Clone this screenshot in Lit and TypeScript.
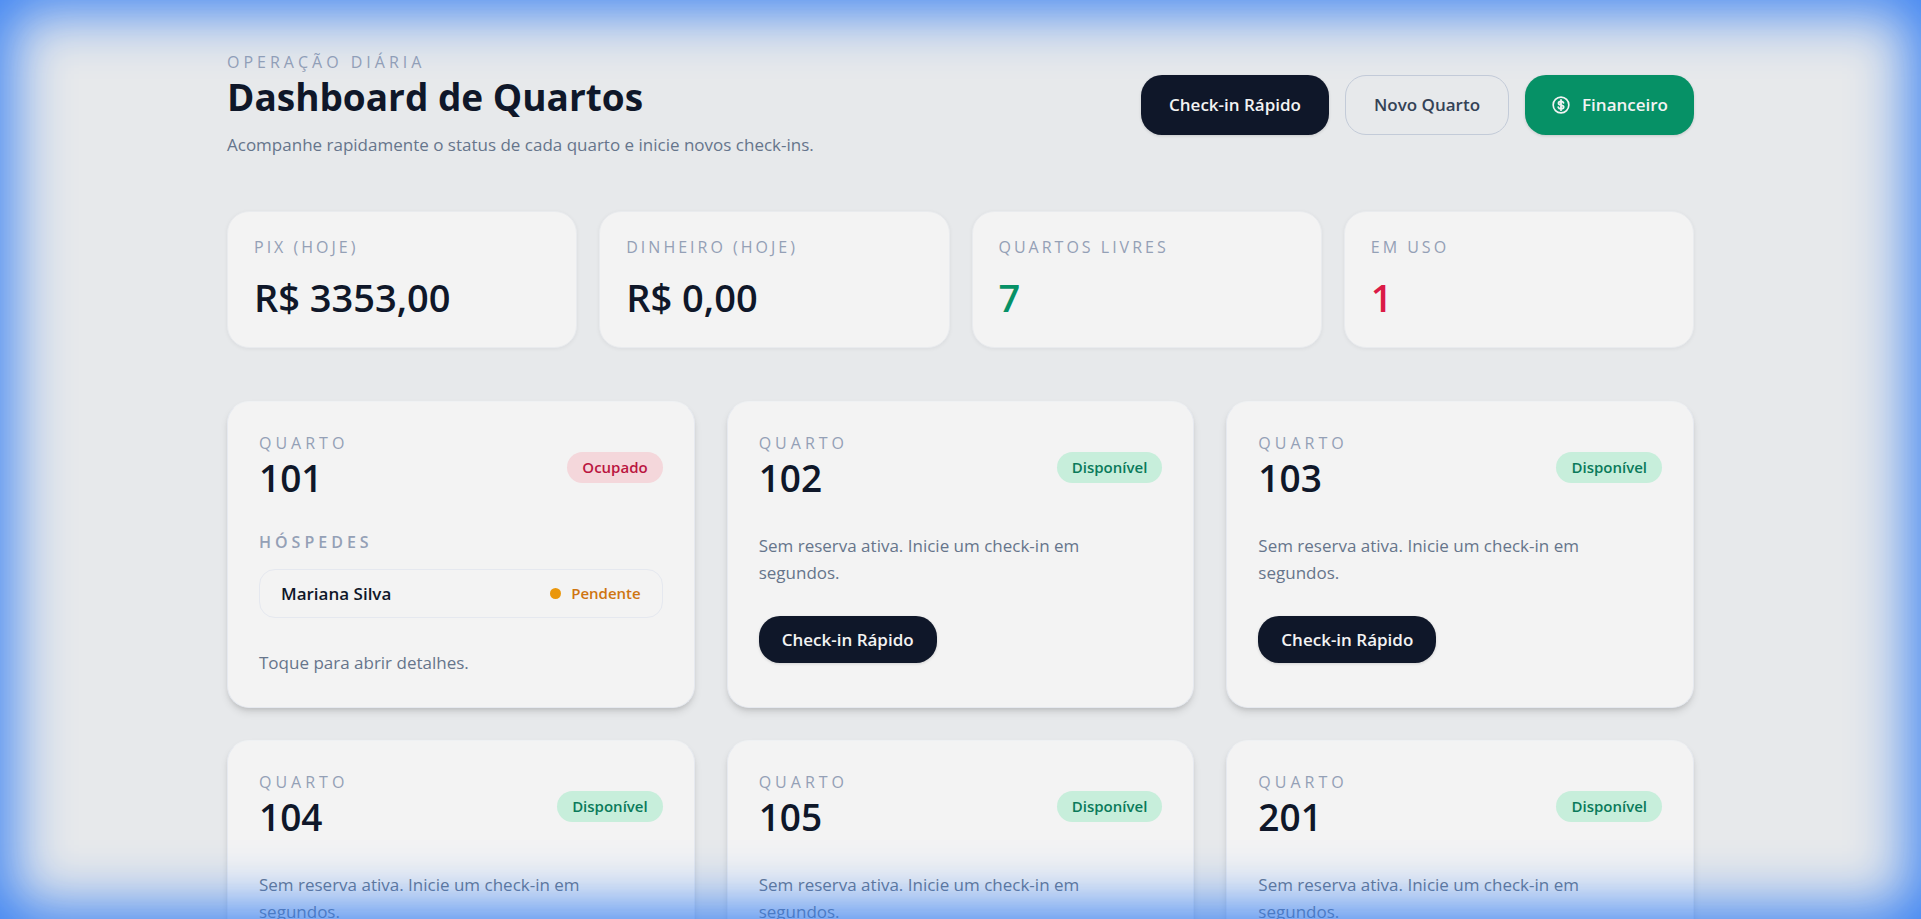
import { LitElement, html, css, svg } from "lit";
import { customElement, property } from "lit/decorators.js";

interface Guest {
  name: string;
  status: string;
}

interface Room {
  number: string;
  guests: Guest[];
}

const ROOMS: Room[] = [
  { number: "101", guests: [{ name: "Mariana Silva", status: "Pendente" }] },
  { number: "102", guests: [] },
  { number: "103", guests: [] },
  { number: "104", guests: [] },
  { number: "105", guests: [] },
  { number: "201", guests: [] },
];

const STATS = [
  { label: "Pix (hoje)", value: "R$ 3353,00", tone: "" },
  { label: "Dinheiro (hoje)", value: "R$ 0,00", tone: "" },
  { label: "Quartos livres", value: "7", tone: "free" },
  { label: "Em uso", value: "1", tone: "busy" },
];

const coin = svg`
  <circle cx="12" cy="12" r="9.4" />
  <path d="M15 9.400c-.4-1.100-1.500-1.700-3-1.700-1.800 0-3 .8-3 2.100 0 3.100 6.200 1.400 6.200 4.500 0 1.400-1.300 2.200-3.200 2.200-1.700 0-2.900-.7-3.300-1.900M12 6v12.200" stroke-width="2.200" />
`;

const shared = css`
  * {
    box-sizing: border-box;
    margin: 0;
  }
  .eyebrow {
    font-size: 16px;
    line-height: 21px;
    font-weight: 400;
    text-transform: uppercase;
    color: #94a0b6;
  }
  .button {
    display: inline-flex;
    align-items: center;
    justify-content: center;
    gap: 11px;
    border: 0;
    border-radius: 21px;
    font: 600 17px/26px "Open Sans", "Noto Sans", sans-serif;
    white-space: nowrap;
    cursor: pointer;
  }
  .dark {
    background: #0f1729;
    color: #f3f3f3;
    box-shadow: 0 1px 3px rgb(0 0 0 / 0.14);
  }
`;

@customElement("room-card")
export class RoomCard extends LitElement {
  @property({ attribute: false }) room!: Room;

  static styles = [
    shared,
    css`
      :host {
        display: block;
      }
      .card {
        height: 100%;
        padding: 31px;
        border: 1px solid #e6e9ef;
        border-top-color: #eff1f3;
        border-radius: 22px;
        background: #f3f3f3;
        box-shadow: 0 5px 8px -1px rgb(0 0 0 / 0.11), 0 3px 5px -2px rgb(0 0 0 / 0.12);
      }
      .head {
        display: flex;
        align-items: center;
        justify-content: space-between;
        margin-bottom: 30px;
      }
      .eyebrow {
        letter-spacing: 4px;
      }
      .number {
        font-size: 37px;
        line-height: 48px;
        font-weight: 600;
        color: #0f1729;
      }
      .pill {
        padding: 5px 15px;
        border-radius: 16px;
        font-size: 15px;
        line-height: 21px;
        font-weight: 600;
        background: #c7eedb;
        color: #0a7a5a;
      }
      .pill.busy {
        background: #f4d7db;
        color: #ba1540;
      }
      .guests-title {
        font-weight: 600;
        margin-bottom: 16px;
      }
      .guests {
        list-style: none;
        padding: 0;
        margin-bottom: 31px;
      }
      .guest {
        display: flex;
        align-items: center;
        justify-content: space-between;
        padding: 10px 21px;
        border: 1px solid #e5e8ef;
        border-radius: 16px;
        font-size: 17px;
        line-height: 27px;
        font-weight: 600;
        color: #0f1729;
      }
      .status {
        display: flex;
        align-items: center;
        gap: 10px;
        font-size: 15px;
        color: #cf7510;
      }
      .dot {
        width: 11px;
        height: 11px;
        border-radius: 50%;
        background: #ea970c;
      }
      .text {
        font-size: 17px;
        line-height: 27px;
        color: #66758b;
      }
      .button {
        margin-top: 30px;
        padding: 11px 23px 10px;
      }
    `,
  ];

  render() {
    const { number, guests } = this.room;
    const busy = guests.length > 0;
    return html`
      <article class="card">
        <header class="head">
          <div>
            <p class="eyebrow">Quarto</p>
            <h2 class="number">${number}</h2>
          </div>
          <span class="pill ${busy ? "busy" : ""}">${busy ? "Ocupado" : "Disponível"}</span>
        </header>
        ${busy
          ? html`
              <h3 class="eyebrow guests-title">Hóspedes</h3>
              <ul class="guests">
                ${guests.map(
                  (g) => html`<li class="guest">
                    <span>${g.name}</span>
                    <span class="status"><span class="dot"></span>${g.status}</span>
                  </li>`,
                )}
              </ul>
              <p class="text">Toque para abrir detalhes.</p>
            `
          : html`
              <p class="text">Sem reserva ativa. Inicie um check-in em segundos.</p>
              <button class="button dark" type="button">Check-in Rápido</button>
            `}
      </article>
    `;
  }
}

@customElement("app-root")
export class AppRoot extends LitElement {
  static styles = [
    shared,
    css`
      :host {
        display: block;
        position: relative;
        height: 100vh;
        overflow: hidden;
        background: #e7e9eb;
        font-family: "Open Sans", "Noto Sans", sans-serif;
      }
      .page {
        max-width: 1467px;
        margin: 0 auto;
        padding: 52px 0;
        display: flex;
        flex-direction: column;
        gap: 53px;
      }
      .top {
        display: flex;
        align-items: center;
        justify-content: space-between;
        gap: 32px;
      }
      .top .eyebrow {
        letter-spacing: 4px;
      }
      .title {
        font-size: 37px;
        line-height: 48px;
        font-weight: 700;
        color: #0f1729;
      }
      .lead {
        margin-top: 10px;
        font-size: 17px;
        line-height: 27px;
        color: #66758b;
      }
      .actions {
        display: flex;
        gap: 16px;
      }
      .actions .button {
        height: 60px;
        padding: 0 28px;
      }
      .actions .outline {
        border: 1px solid #c3cbd8;
        background: transparent;
        color: #344256;
      }
      .actions .green {
        padding: 0 26px;
        background: #069166;
        color: #f3f3f3;
        box-shadow: 0 1px 3px rgb(0 0 0 / 0.14);
      }
      .coin {
        width: 20px;
        height: 20px;
        fill: none;
        stroke: currentColor;
        stroke-width: 2;
        stroke-linecap: round;
      }
      .stats {
        display: grid;
        grid-template-columns: repeat(4, 1fr);
        gap: 22px;
      }
      .stat {
        display: flex;
        flex-direction: column;
        gap: 15px;
        padding: 25px 26px 26px;
        border: 1px solid #e9ebee;
        border-radius: 22px;
        background: #f3f3f3;
        box-shadow: 0 1px 4px rgb(15 23 42 / 0.06);
      }
      .stat .eyebrow {
        letter-spacing: 3px;
      }
      .value {
        margin: 0;
        font-size: 38px;
        line-height: 48px;
        font-weight: 600;
        color: #0f1729;
      }
      .free {
        color: #069166;
      }
      .busy {
        color: #db1a46;
      }
      .rooms {
        display: grid;
        grid-template-columns: repeat(3, 1fr);
        gap: 32px;
      }
      .glow {
        position: absolute;
        inset: 0;
        pointer-events: none;
        box-shadow: inset 0 0 56px 12px rgb(54 127 243 / 0.97);
      }
    `,
  ];

  render() {
    return html`
      <main class="page">
        <header class="top">
          <div>
            <p class="eyebrow">Operação diária</p>
            <h1 class="title">Dashboard de Quartos</h1>
            <p class="lead">Acompanhe rapidamente o status de cada quarto e inicie novos check-ins.</p>
          </div>
          <div class="actions">
            <button class="button dark" type="button">Check-in Rápido</button>
            <button class="button outline" type="button">Novo Quarto</button>
            <button class="button green" type="button">
              <svg class="coin" viewBox="0 0 24 24" aria-hidden="true">${coin}</svg>
              Financeiro
            </button>
          </div>
        </header>
        <dl class="stats">
          ${STATS.map(
            (s) => html`<div class="stat">
              <dt class="eyebrow">${s.label}</dt>
              <dd class="value ${s.tone}">${s.value}</dd>
            </div>`,
          )}
        </dl>
        <section class="rooms" aria-label="Quartos">
          ${ROOMS.map((room) => html`<room-card .room=${room}></room-card>`)}
        </section>
      </main>
      <div class="glow"></div>
    `;
  }
}
